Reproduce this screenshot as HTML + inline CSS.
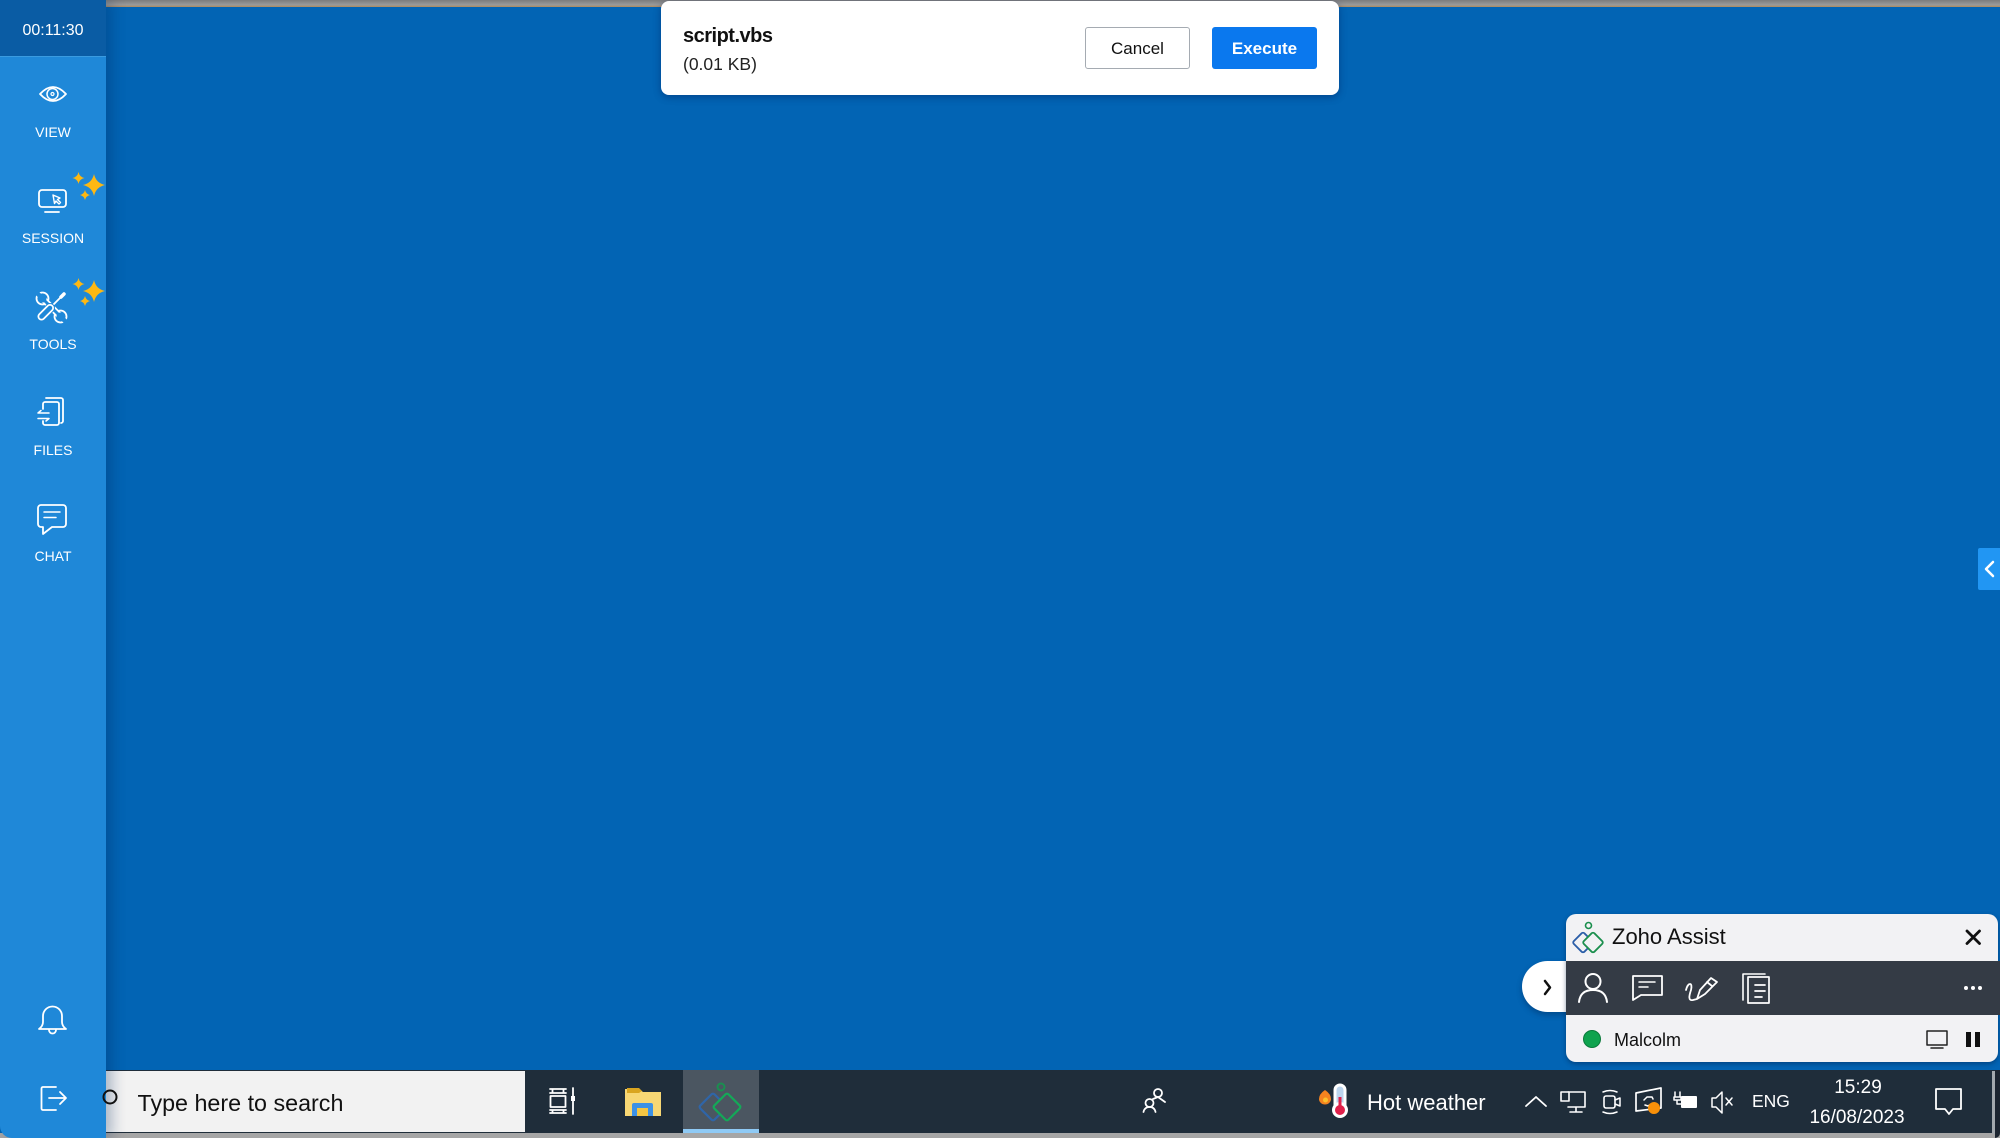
<!DOCTYPE html>
<html><head><meta charset="utf-8"><style>
*{box-sizing:border-box}
html,body{margin:0;padding:0}
body{width:2000px;height:1138px;position:relative;overflow:hidden;background:#0264b4;font-family:"Liberation Sans",sans-serif}
.a{position:absolute}
.t{position:absolute;white-space:nowrap;line-height:1}
.lbl{position:absolute;left:0;width:106px;text-align:center;color:#fff;font-size:14px;line-height:1}
</style></head><body>
<div class="a" style="left:0;top:0;width:2000px;height:7px;background:linear-gradient(#7c7c7c,#9a9a9a 70%,#b08a5c)"></div>
<div class="a" style="left:0;top:1133px;width:2000px;height:5px;background:#a6a6a6"></div>
<div class="a" style="left:106px;top:1070px;width:1894px;height:63px;background:#1f2d3a"></div>
<div class="a" style="left:1995px;top:1070px;width:5px;height:68px;background:#1c2530;border-bottom-right-radius:8px"></div>
<div class="a" style="left:1992px;top:1071px;width:3px;height:63px;background:#a3a9ae"></div>
<div class="a" style="left:106px;top:1071px;width:419px;height:61px;background:#f2f2f2"></div>
<div class="a" style="left:683px;top:1070px;width:76px;height:63px;background:#4b5661"></div>
<div class="a" style="left:683px;top:1129px;width:76px;height:4px;background:#8fcaf5"></div>

<div class="a" style="left:0;top:0;width:106px;height:1138px;background:#1f88d8;border-bottom-left-radius:12px;box-shadow:6px 0 14px rgba(0,40,90,.3)"></div>
<div class="a" style="left:0;top:0;width:106px;height:57px;background:#0a5ca4;border-bottom:1px solid #3a9be0"></div>
<div class="t" style="left:0;width:106px;top:23px;text-align:center;color:#fff;font-size:16px">00:11:30</div>
<div class="lbl" style="top:125px">VIEW</div>
<div class="lbl" style="top:231px">SESSION</div>
<div class="lbl" style="top:337px">TOOLS</div>
<div class="lbl" style="top:443px">FILES</div>
<div class="lbl" style="top:549px">CHAT</div>

<div class="a" style="left:661px;top:1px;width:678px;height:94px;background:#fff;border-radius:8px;box-shadow:0 2px 8px rgba(0,30,90,.45)"></div>
<div class="t" style="left:683px;top:26px;font-size:20px;font-weight:bold;color:#111;letter-spacing:-.5px">script.vbs</div>
<div class="t" style="left:683px;top:56px;font-size:17.500px;color:#222">(0.01 KB)</div>
<div class="a" style="left:1085px;top:27px;width:105px;height:42px;background:#fff;border:1.500px solid #a5abb2;border-radius:3px;color:#111;font-size:17px;line-height:41px;text-align:center">Cancel</div>
<div class="a" style="left:1212px;top:27px;width:105px;height:42px;background:#0a78ee;border-radius:3px;color:#fff;font-size:17px;font-weight:bold;line-height:43px;text-align:center">Execute</div>

<div class="a" style="left:1978px;top:548px;width:22px;height:42px;background:#2196f3;border-radius:2px 0 0 2px"></div>

<div class="a" style="left:1522px;top:961px;width:60px;height:51px;background:#fff;border-radius:26px 0 0 26px;box-shadow:0 3px 6px rgba(0,30,70,.35)"></div>
<div class="a" style="left:1566px;top:914px;width:432px;height:148px;background:#f2f2f4;border-radius:10px;box-shadow:0 2px 5px rgba(0,30,70,.45)"></div>
<div class="a" style="left:1566px;top:961px;width:434px;height:54px;background:#343b45"></div>
<div class="t" style="left:1612px;top:926px;font-size:22px;color:#111">Zoho Assist</div>
<div class="t" style="left:1614px;top:1031px;font-size:18px;color:#111">Malcolm</div>
<div class="t" style="left:137.500px;top:1092px;font-size:23.300px;color:#111">Type here to search</div>
<div class="t" style="left:1367px;top:1092px;font-size:22px;color:#fff">Hot weather</div>
<div class="t" style="left:1752px;top:1093px;font-size:17.500px;color:#fff">ENG</div>
<div class="t" style="left:1810px;top:1078px;width:96px;text-align:center;font-size:19px;color:#fff">15:29</div>
<div class="t" style="left:1805px;top:1108px;width:104px;text-align:center;font-size:19px;color:#fff">16/08/2023</div>

<svg class="a" style="left:0;top:0" width="2000" height="1138" viewBox="0 0 2000 1138" fill="none" stroke="#fff" stroke-width="1.800" stroke-linecap="round" stroke-linejoin="round">
<!-- view -->
<path d="M40 94Q53 80 66 94Q53 108 40 94Z"/><circle cx="52.500" cy="94" r="5.500" stroke-width="1.500"/><circle cx="52.500" cy="94" r="1.500" stroke-width="1.200"/>
<!-- session -->
<rect x="39" y="190" width="27" height="17" rx="3"/><path d="M45 212H59"/><path d="M53 195l7 3-2.500 1.500 3 3-1.500 1.500-3-3-1.500 2.500z" stroke-width="1.400"/>
<!-- tools -->
<g>
<path d="M44 300L59 315" stroke-width="6.500"/><circle cx="42.500" cy="298.500" r="6"/><circle cx="60.500" cy="316.500" r="6"/>
<g stroke="#1f88d8"><path d="M44 300L59 315" stroke-width="3"/><circle cx="42.500" cy="298.500" r="3.500" fill="#1f88d8" stroke-width="1"/><circle cx="60.500" cy="316.500" r="3.500" fill="#1f88d8" stroke-width="1"/><path d="M42 298L36 292M61 317l6 6" stroke-width="4.500"/></g>
<path d="M52 306L62 296" stroke="#1f88d8" stroke-width="5"/><path d="M52 306L61 297" stroke-width="1.800"/><path d="M61 297l3-3" stroke-width="3.500"/>
<path d="M41.500 316.500L50 308" stroke="#1f88d8" stroke-width="10"/><path d="M41.500 316.500L50 308" stroke-width="8"/><path d="M41.500 316.500L50 308" stroke="#1f88d8" stroke-width="4.500"/>
</g>
<!-- files -->
<path d="M46 398h15a2 2 0 0 1 2 2v21a2 2 0 0 1-2 2"/><path d="M43 409v-5a2 2 0 0 1 2-2h12a2 2 0 0 1 2 2v19a2 2 0 0 1-2 2H45a2 2 0 0 1-2-2v-2"/><path d="M49 413H38l3-2.500M38 418.500h11l-3 2.500" stroke-width="1.500"/>
<!-- chat -->
<path d="M41 505h22a3 3 0 0 1 3 3v16a3 3 0 0 1-3 3H52l-9 7v-7h-2a3 3 0 0 1-3-3v-16a3 3 0 0 1 3-3z"/><path d="M44 512H60M44 517.500H56" stroke-width="1.500"/>
<!-- bell -->
<path d="M39 1029q4-3 4-7v-6a9.500 9.500 0 0 1 19 0v6q0 4 4 7zM49 1030a3.500 3.500 0 0 0 7 0"/>
<!-- logout -->
<path d="M56 1087H43a1.500 1.500 0 0 0-1.500 1.500v20a1.500 1.500 0 0 0 1.500 1.500h13M49 1098H66M60 1092l6 6-6 6"/>
<!-- sparkles -->
<g fill="#fdb813" stroke="none">
<path d="M94 174Q96 183 105 185Q96 187 94 196Q92 187 83 185Q92 183 94 174Z"/>
<path d="M78.500 172Q79.500 177 84.500 178Q79.500 179 78.500 184Q77.500 179 72.500 178Q77.500 177 78.500 172Z"/>
<path d="M85 190Q86 194 90 195Q86 196 85 200Q84 196 80 195Q84 194 85 190Z"/>
<path d="M94 280Q96 289 105 291Q96 293 94 302Q92 293 83 291Q92 289 94 280Z"/>
<path d="M78.500 278Q79.500 283 84.500 284Q79.500 285 78.500 290Q77.500 285 72.500 284Q77.500 283 78.500 278Z"/>
<path d="M85 296Q86 300 90 301Q86 302 85 306Q84 302 80 301Q84 300 85 296Z"/>
</g>
<!-- side chevron -->
<path d="M1993 562l-7 7 7 7" stroke-width="2.500"/>
<!-- search circle -->
<circle cx="110" cy="1097" r="6.500" stroke="#111" stroke-width="2"/>
<!-- task view -->
<g stroke-width="1.800"><path d="M550 1089h16M550 1093h16M552.500 1089v4M563.500 1089v4M550.500 1096h15v11h-15zM550 1110h16M550 1113h16M552.500 1110v3M563.500 1110v3M573 1088v26"/></g><rect x="571" y="1096" width="4" height="5" fill="#fff" stroke="none"/>
<!-- folder -->
<path d="M625 1089h14l4 3h18v24h-36z" fill="#f7d774" stroke="none"/><path d="M627 1088h12l3 3 -3 2h-12z" fill="#d9a520" stroke="none"/>
<path d="M632 1116v-11a2 2 0 0 1 2-2h17a2 2 0 0 1 2 2v11h-5v-8h-11v8z" fill="#3c91e6" stroke="none"/><rect x="637" y="1108" width="11" height="8" fill="#f4c542" stroke="none"/>
<!-- taskbar logo -->
<circle cx="721" cy="1087" r="3.500" stroke="#1a8f50" stroke-width="2"/>
<rect x="-10" y="-10" width="20" height="20" rx="2" transform="translate(713 1107) rotate(45)" stroke="#2f65a8" stroke-width="2.200"/>
<rect x="-10" y="-10" width="20" height="20" rx="2" transform="translate(727 1107) rotate(45)" fill="#4b5661" stroke="#14a858" stroke-width="2.200"/>
<!-- people -->
<circle cx="1158" cy="1093" r="4"/><circle cx="1149.500" cy="1103" r="4"/><path d="M1143.500 1112q1-5 6-5t6 5M1153 1099l5-2 7 5"/>
<!-- flame + thermometer -->
<path d="M1325 1090q6 4 6 9a6 5.500 0 0 1-12 0q0-5 6-9z" fill="#f4831f" stroke="none"/><circle cx="1325.500" cy="1100" r="2.500" fill="#fbc02d" stroke="none"/>
<rect x="1335" y="1085" width="10" height="26" rx="5" fill="#bcd5ee" stroke="#fff" stroke-width="3"/><circle cx="1340" cy="1110" r="6.500" fill="#e0204a" stroke="#fff" stroke-width="3"/><rect x="1338.500" y="1097" width="3" height="11" fill="#e0204a" stroke="none"/>
<!-- tray -->
<path d="M1526 1106l10-9 10 9"/>
<path d="M1568 1092h17v15h-17M1576 1107v5M1570 1112h12" stroke-width="1.600"/><rect x="1561" y="1092" width="8" height="9" fill="#1f2d3a" stroke-width="1.600"/>
<rect x="1604" y="1096" width="11" height="12" rx="2" stroke-width="1.600"/><path d="M1615 1100l5-2v8l-5-2M1603 1092q7-3 14 0M1603 1112q7 3 14 0" stroke-width="1.500"/>
<path d="M1636 1093l25-5v20l-25 3z" stroke-width="1.700"/><path d="M1644 1100l3-3 5 0 1 2M1651 1104l-3 2-3-1" stroke-width="1.500"/><circle cx="1654" cy="1108" r="6" fill="#f79009" stroke="none"/>
<rect x="1681" y="1096" width="16" height="12" rx="1" fill="#fff" stroke="none"/><path d="M1675 1092v5M1680 1092v5M1674 1097h7v3h-7zM1677 1100v4h4" stroke-width="1.500"/>
<path d="M1712 1098h4l6-6v21l-6-6h-4zM1726 1098l6 7M1732 1098l-6 7" stroke-width="1.500"/>
<path d="M1936 1089h25v20h-8l-4 5-4-5h-9z" stroke-width="1.800"/>
<!-- widget header -->
<circle cx="1588.500" cy="925.500" r="3" stroke="#1b8f4d" stroke-width="1.600"/>
<rect x="-7.500" y="-7.500" width="15" height="15" rx="2" transform="translate(1583 942.500) rotate(45)" stroke="#2b5ea8" stroke-width="1.800"/>
<rect x="-7.500" y="-7.500" width="15" height="15" rx="2" transform="translate(1593 942.500) rotate(45)" fill="#f2f2f4" stroke="#1b8f4d" stroke-width="1.800"/>
<path d="M1967 931l12.500 12.500M1979.500 931l-12.500 12.500" stroke="#111" stroke-width="2.800"/>
<path d="M1545 981l5 6.500-5 6.500" stroke="#111" stroke-width="2.500"/>
<!-- widget icons -->
<circle cx="1593" cy="981.500" r="7.500" stroke-width="2"/><path d="M1579 1002c1-9 7-12 14-12s13 3 14 12" stroke-width="2"/>
<path d="M1633 976h29v19h-21l-8 5z"/><path d="M1639 982h16M1639 987h9" stroke-width="1.500"/>
<path d="M1686 990C1688 982 1693 982 1691 990C1689 996 1688 1001 1693 1000L1697 999L1700 990L1711 978L1717 982L1705 994L1697 999M1707 982l5 4" stroke-width="1.800"/>
<path d="M1748 974h-5v26M1743 974h22" stroke-width="1.600"/><path d="M1748 977h21v26h-21zM1755 985h10M1755 991h10M1755 997h7" stroke-width="1.700"/>
<g fill="#fff" stroke="none"><circle cx="1966" cy="988" r="2"/><circle cx="1973" cy="988" r="2"/><circle cx="1980" cy="988" r="2"/></g>
<!-- widget bottom -->
<circle cx="1592" cy="1039" r="8.500" fill="#0fa34e" stroke="#0a7a3a" stroke-width="1"/>
<path d="M1927 1031h20v14h-20zM1931 1048h12" stroke="#222" stroke-width="1.500"/>
<g fill="#111" stroke="none"><rect x="1966" y="1032" width="5" height="15"/><rect x="1975" y="1032" width="5" height="15"/></g>
</svg>
</body></html>
